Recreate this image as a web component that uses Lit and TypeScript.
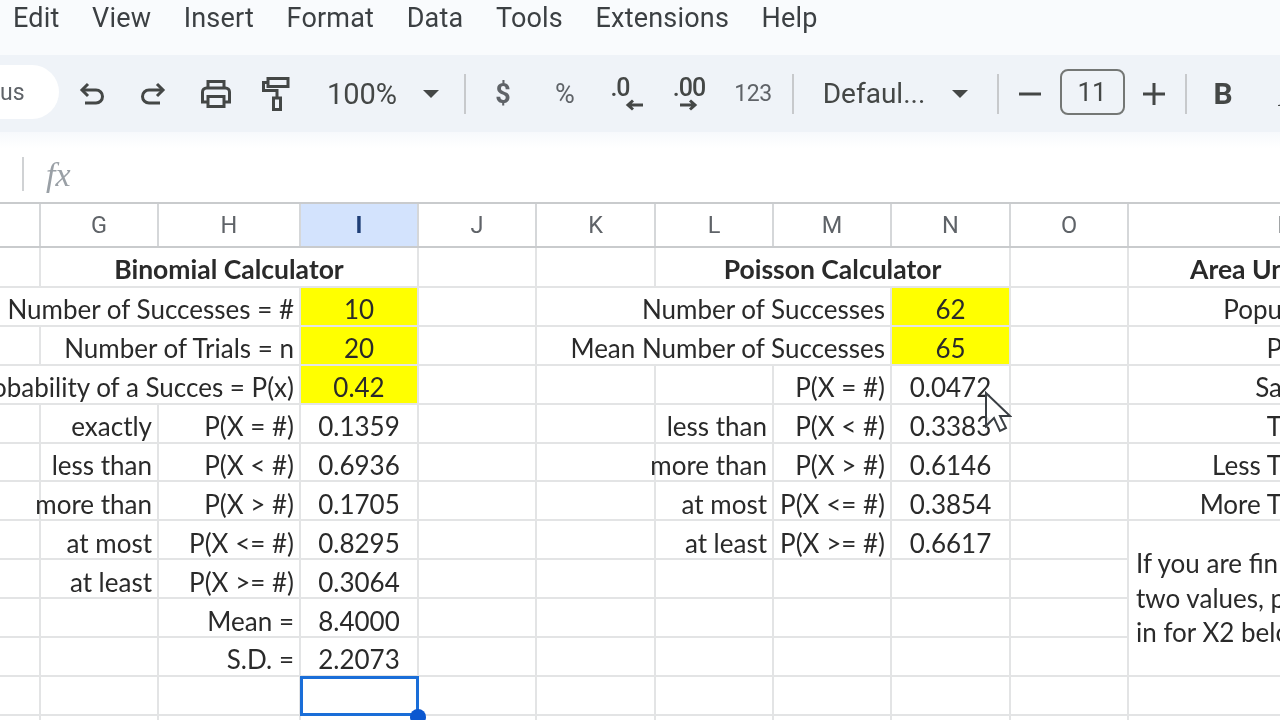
import { LitElement, html, css, svg } from 'lit'
import { customElement } from 'lit/decorators.js'

type Cell = { t?: string; span?: number; rows?: number; c?: string }

const blank = (n = 1): Cell[] => Array.from({ length: n }, () => ({}))
const num = (t: string): Cell => ({ t, c: 'mid' })
const yel = (t: string): Cell => ({ t, c: 'mid yellow' })
const right = (t: string, span = 1): Cell => ({ t, span, c: 'right' })
const edge = (t: string): Cell => ({ t, c: 'right edge' })

const COLS = ['', 'G', 'H', 'I', 'J', 'K', 'L', 'M', 'N', 'O']

const calc = (a: string, b: string, v: string): Cell[] => [{}, right(a), right(b), num(v), {}]

// rows left to right, F through Q
const ROWS: Cell[][] = [
    [{}, { t: 'Binomial Calculator', span: 3, c: 'mid bold' }, {}, {}, { t: 'Poisson Calculator', span: 3, c: 'mid bold' }, {}, { t: 'Area Un', span: 2, c: 'bold area' }],
    [right('Number of Successes = #', 3), yel('10'), {}, right('Number of Successes', 3), yel('62'), {}, edge('Popu'), {}],
    [{}, right('Number of Trials = n', 2), yel('20'), {}, right('Mean Number of Successes', 3), yel('65'), {}, edge('P'), {}],
    [right('Probability of a Succes = P(x)', 3), yel('0.42'), {}, {}, {}, right('P(X = #)'), num('0.0472'), {}, edge('Sa'), {}],
    [...calc('exactly', 'P(X = #)', '0.1359'), {}, right('less than'), right('P(X < #)'), num('0.3383'), {}, edge('T'), {}],
    [...calc('less than', 'P(X < #)', '0.6936'), {}, right('more than'), right('P(X > #)'), num('0.6146'), {}, edge('Less T'), {}],
    [...calc('more than', 'P(X > #)', '0.1705'), {}, right('at most'), right('P(X <= #)'), num('0.3854'), {}, edge('More T'), {}],
    [...calc('at most', 'P(X <= #)', '0.8295'), {}, right('at least'), right('P(X >= #)'), num('0.6617'), {}, { t: 'If you are fin\ntwo values, p\nin for X2 belo', span: 2, rows: 4, c: 'note' }],
    [...calc('at least', 'P(X >= #)', '0.3064'), ...blank(5)],
    [{}, {}, right('Mean ='), num('8.4000'), ...blank(6)],
    [{}, {}, right('S.D. ='), num('2.2073'), ...blank(6)],
    [{}, {}, {}, { c: 'selected' }, ...blank(8)],
    blank(12),
]

const icon = (w: number, h: number, body: unknown) =>
    html`<svg width=${w} height=${h} viewBox="0 0 ${w} ${h}" fill="none" stroke="#444746" stroke-width="3">${body}</svg>`

const undo = icon(26, 24, svg`<path d="M9 2 3 8l6 6"/><path d="M3 8h14a6 6 0 0 1 0 13H6"/>`)
const redo = icon(26, 24, svg`<path d="m17 2 6 6-6 6"/><path d="M23 8H9a6 6 0 0 0 0 13h11"/>`)
const printer = icon(32, 30, svg`<path d="M8 9V2.500h16V9"/><path d="M8 23H2.500V13a4 4 0 0 1 4-4h19a4 4 0 0 1 4 4v10H24"/><path d="M8 17.500h16v10H8z"/>`)
const roller = icon(30, 36, svg`<path d="M7 2.500h20v8H7z"/><path d="M7 6.500H2.500v8H16v7"/><path d="M12.500 22h7v11.500h-7z"/>`)
const arrowLeft = icon(18, 12, svg`<path d="M18 6H4M8 1.500 3 6l5 4.500"/>`)
const arrowRight = icon(18, 12, svg`<path d="M0 6h14M10 1.500 15 6l-5 4.500"/>`)
const minus = icon(22, 4, svg`<path d="M0 2h22"/>`)
const plus = icon(22, 22, svg`<path d="M0 11h22M11 0v22"/>`)
const caret = html`<i class="caret"></i>`
const sep = html`<i class="sep"></i>`

@customElement('app-root')
export class AppRoot extends LitElement {
    static styles = css`
        :host {
            display: block;
            position: relative;
            width: 1280px;
            height: 720px;
            overflow: hidden;
            background: #fff;
            font-family: Lato, 'Liberation Sans', sans-serif;
            color: #1f1f1f;
            filter: blur(0.45px);
        }

        .menu {
            height: 55px;
            box-sizing: border-box;
            background: #f9fbfd;
            display: flex;
            gap: 32.500px;
            padding: 0 0 20px 13px;
            align-items: center;
            font: 27px Roboto, sans-serif;
            letter-spacing: 0.2px;
            color: #3c4043;
        }

        .tools {
            height: 77px;
            background: #eff3f8;
            display: grid;
            grid-template-columns: 59px 66px 56px 70px 50px 122px 16px 52px 24px 100px 24px 100px 28px 52px 110px 62px 14px 50px 74px 50px 14px 60px 62px;
            font-family: Roboto, sans-serif;
            color: #444746;
        }

        .tools > * {
            display: flex;
            justify-content: center;
            align-items: center;
            white-space: nowrap;
        }

        .tools .pill {
            background: #fff;
            border-radius: 0 27px 27px 0;
            height: 54px;
            margin-top: 10px;
            justify-content: flex-start;
            font-size: 23px;
            color: #5f6368;
        }

        .txt { font-size: 28px; }
        .pct { font-size: 29px; }
        .dollar { font-size: 27px; font-weight: 700; color: #5f6368; }
        .percent { font-size: 27px; color: #5f6368; }
        .fmt123 { font-size: 23px; letter-spacing: -0.5px; color: #5f6368; }
        .b { font-size: 30px; font-weight: 700; }
        .ital { font-size: 30px; font-weight: 700; font-style: italic; font-family: 'Liberation Serif', serif; padding-top: 4px; }

        .tools > .fmt {
            font-size: 25px;
            font-weight: 500;
            letter-spacing: -1px;
            line-height: 22px;
            flex-direction: column;
        }

        .fmt-less span { margin-right: 14px; }
        .fmt-less svg { margin-left: 14px; }

        .caret {
            width: 0;
            height: 0;
            border-left: 8px solid transparent;
            border-right: 8px solid transparent;
            border-top: 8px solid #444746;
            display: block;
        }

        .sep {
            width: 2px;
            height: 40px;
            background: #c7c9cc;
            display: block;
        }

        .box {
            width: 65px;
            height: 46px;
            margin-top: -3px;
            box-sizing: border-box;
            border: 2px solid #747775;
            border-radius: 8px;
            font-size: 26px;
            display: flex;
            align-items: center;
            justify-content: center;
        }

        .fade {
            height: 16px;
            background: linear-gradient(#f7f9fc, #fff);
        }

        .formula {
            height: 54px;
            display: flex;
            align-items: center;
            padding-left: 22px;
            box-sizing: border-box;
        }

        .formula i.bar {
            width: 2px;
            height: 34px;
            background: #d0d2d4;
            margin-top: -2px;
        }

        .formula .fx {
            margin-left: 22px;
            font: italic 34px 'Liberation Serif', serif;
            color: #9aa0a6;
        }

        .grid {
            display: grid;
            grid-template-columns: 41px 118px 142px 118px 118px 119px 118px 118px 119px 118px 153px 159px;
        }

        .head {
            height: 46px;
            box-sizing: border-box;
            border-top: 2px solid #c9cbcd;
            border-bottom: 2px solid #c9cbcd;
            font: 23.500px Roboto, sans-serif;
            color: #5f6368;
        }

        .head > div {
            display: flex;
            align-items: center;
            justify-content: center;
            border-right: 2px solid #d5d7d9;
        }

        .head > .on {
            background: #d3e3fd;
            color: #1f3f77;
            font-weight: 700;
        }

        .head > .last {
            grid-column: span 2;
            border-right: 0;
        }

        .body {
            grid-template-rows: 40px;
            grid-auto-rows: 38.9px;
            font-size: 26px;
            color: #2a2a2a;
        }

        .cell {
            box-sizing: border-box;
            border-right: 2px solid #e3e4e5;
            border-bottom: 2px solid #e3e4e5;
            display: flex;
            align-items: center;
            white-space: nowrap;
            min-width: 0;
            padding-top: 6px;
        }

        .right { justify-content: flex-end; padding-right: 5px; }
        .edge { padding-right: 0; border-right: 0; }
        .mid { justify-content: center; }
        .bold { font-weight: 700; font-size: 26.500px; padding-top: 4px; }
        .area { padding-left: 61px; }
        .yellow { background: #ffff00; }

        .note {
            padding: 0 0 0 7px;
            line-height: 34.500px;
            white-space: pre;
            border-right: 0;
        }

        .selected {
            position: relative;
            border: 3px solid #1a6ed8;
            margin: -1px 0 0 -1px;
        }

        .handle {
            position: absolute;
            right: -10px;
            bottom: -12px;
            width: 16px;
            height: 16px;
            border-radius: 50%;
            background: #0b57d0;
        }

        .cursor {
            position: absolute;
            left: 984px;
            top: 391px;
        }
    `

    renderCell(cell: Cell) {
        const style = [
            cell.span ? `grid-column: span ${cell.span}` : '',
            cell.rows ? `grid-row: span ${cell.rows}` : '',
        ].join(';')
        const inner = cell.c === 'selected' ? html`<i class="handle"></i>` : cell.t ?? ''
        return html`<div class="cell ${cell.c ?? ''}" style=${style}><span>${inner}</span></div>`
    }

    render() {
        return html`
            <div class="menu">
                ${['Edit', 'View', 'Insert', 'Format', 'Data', 'Tools', 'Extensions', 'Help'].map(m => html`<span>${m}</span>`)}
            </div>
            <div class="tools">
                <div class="pill">us</div>
                <div>${undo}</div>
                <div>${redo}</div>
                <div>${printer}</div>
                <div>${roller}</div>
                <div class="pct">100%</div>
                <div>${caret}</div>
                <div>${sep}</div>
                <div class="dollar">$</div>
                <div class="percent">%</div>
                <div class="fmt fmt-less"><span>.0</span>${arrowLeft}</div>
                <div class="fmt"><span>.00</span>${arrowRight}</div>
                <div class="fmt123">123</div>
                <div>${sep}</div>
                <div class="txt">Defaul...</div>
                <div>${caret}</div>
                <div>${sep}</div>
                <div>${minus}</div>
                <div><div class="box">11</div></div>
                <div>${plus}</div>
                <div>${sep}</div>
                <div class="b">B</div>
                <div class="ital">I</div>
            </div>
            <div class="fade"></div>
            <div class="formula"><i class="bar"></i><span class="fx">fx</span></div>
            <div class="grid head">
                ${COLS.map(c => html`<div class=${c === 'I' ? 'on' : ''}>${c}</div>`)}
                <div class="last">P</div>
            </div>
            <div class="grid body">
                ${ROWS.flat().map(c => this.renderCell(c))}
            </div>
            <svg class="cursor" width="28" height="44" viewBox="0 0 28 44">
                <path d="M2 2v33l8-8 6 13 6-3-6-12h10z" fill="#fff" fill-opacity=".85" stroke="#3a3f44" stroke-width="2"/>
            </svg>
        `
    }
}
